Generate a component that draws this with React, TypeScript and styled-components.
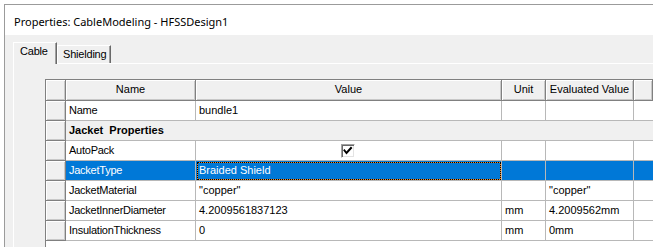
import React from "react";
import styled, { createGlobalStyle, css } from "styled-components";

const GlobalStyle = createGlobalStyle`
  html, body {
    margin: 0;
    padding: 0;
    height: 100%;
    background: #fff;
    overflow: hidden;
  }
  body {
    font-family: "Liberation Sans", Arial, sans-serif;
    font-size: 11px;
    color: #000;
  }
  #root {
    height: 100%;
  }
`;

const columns = [
  { key: "name", label: "Name", width: 130 },
  { key: "value", label: "Value", width: 306 },
  { key: "unit", label: "Unit", width: 44 },
  { key: "evaluated", label: "Evaluated Value", width: 88 },
];

type PropRow = {
  name: string;
  value?: string;
  unit?: string;
  evaluated?: string;
  checkbox?: boolean;
  group?: boolean;
  selected?: boolean;
};

const rows: PropRow[] = [
  { name: "Name", value: "bundle1" },
  { name: "Jacket  Properties", group: true },
  { name: "AutoPack", checkbox: true },
  { name: "JacketType", value: "Braided Shield", selected: true },
  { name: "JacketMaterial", value: '"copper"', evaluated: '"copper"' },
  {
    name: "JacketInnerDiameter",
    value: "4.2009561837123",
    unit: "mm",
    evaluated: "4.2009562mm",
  },
  { name: "InsulationThickness", value: "0", unit: "mm", evaluated: "0mm" },
];

const Window = styled.div`
  box-sizing: border-box;
  margin: 4px 0 0 4px;
  height: calc(100% - 4px);
  border-top: 1px solid #9b9b9b;
  border-left: 1px solid #9b9b9b;
  display: flex;
  flex-direction: column;
`;

const TitleBar = styled.div`
  flex: none;
  box-sizing: border-box;
  height: 30px;
  padding: 3px 0 0 9px;
  display: flex;
  align-items: center;
  background: #fff;
  font-family: "Noto Sans", "Open Sans", sans-serif;
  font-size: 11px;
  color: #000;
`;

const DialogBody = styled.div`
  flex: 1;
  min-height: 0;
  display: flex;
  flex-direction: column;
  background: #f0f0f0;
  padding: 7px 0 0 8px;
`;

const TabStrip = styled.div`
  flex: none;
  height: 21px;
  display: flex;
  align-items: flex-end;
  position: relative;
  z-index: 1;
`;

const Tab = styled.div<{ $active?: boolean }>`
  box-sizing: border-box;
  padding-top: 2px;
  background: #f0f0f0;
  border-top: 1px solid #fff;
  border-left: 1px solid #fff;
  border-right: 1px solid #696969;
  box-shadow: inset -1px 0 #a0a0a0;
  line-height: 13px;
  white-space: nowrap;
  letter-spacing: -0.2px;
  ${(p) =>
    p.$active
      ? css`
          width: 44px;
          height: 22px;
          margin-bottom: -1px;
          padding-left: 6px;
        `
      : css`
          width: 54px;
          height: 18px;
          padding-left: 5px;
        `}
`;

const TabPanel = styled.div`
  flex: 1;
  min-height: 0;
  display: flex;
  border-top: 1px solid #fff;
  border-left: 1px solid #fff;
  padding: 15px 0 0 31px;
`;

const Grid = styled.div`
  flex: 1;
  min-width: 0;
  background: #fff;
  border-top: 1px solid #808080;
  border-left: 1px solid #808080;
  overflow: hidden;
`;

const GridRow = styled.div<{ $header?: boolean }>`
  display: flex;
  height: ${(p) => (p.$header ? 21 : 20)}px;
`;

const HeaderCell = styled.div<{ $w?: number }>`
  box-sizing: border-box;
  ${(p) => (p.$w ? `width: ${p.$w}px; flex: none;` : `flex: 1;`)}
  background: #f0f0f0;
  border-right: 1px solid #808080;
  border-bottom: 1px solid #808080;
  box-shadow: inset 1px 1px #fff, inset -1px -1px #c8c8c8;
  text-align: center;
  line-height: 19px;
  white-space: nowrap;
  overflow: hidden;
`;

const RowHeader = styled(HeaderCell)`
  width: 20px;
  flex: none;
`;

const focusRect = css`
  &::before,
  &::after {
    content: "";
    position: absolute;
    top: 1px;
    left: 1px;
    right: 0;
    bottom: 0;
  }
  &::before {
    border: 1px solid #f2861e;
  }
  &::after {
    border: 1px dotted #000;
  }
`;

const Cell = styled.div<{
  $w?: number;
  $selected?: boolean;
  $focus?: boolean;
  $last?: boolean;
  $tight?: boolean;
}>`
  box-sizing: border-box;
  position: relative;
  ${(p) => (p.$w ? `width: ${p.$w}px; flex: none;` : `flex: 1;`)}
  padding-left: 3px;
  border-right: ${(p) => (p.$last ? "none" : "1px solid #b8b8b8")};
  border-bottom: 1px solid #b8b8b8;
  line-height: 19px;
  letter-spacing: ${(p) => (p.$tight ? "-0.25px" : "0")};
  background: ${(p) => (p.$selected ? "#0078d7" : "#fff")};
  color: ${(p) => (p.$selected ? "#fff" : "#000")};
  white-space: nowrap;
  overflow: hidden;
  ${(p) => p.$focus && focusRect}
`;

const GroupCell = styled.div`
  flex: 1;
  box-sizing: border-box;
  padding-left: 3px;
  background: #f0f0f0;
  border-bottom: 1px solid #b8b8b8;
  font-weight: bold;
  line-height: 19px;
  white-space: pre;
`;

const CheckCell = styled(Cell)`
  display: flex;
  align-items: center;
  justify-content: center;
  padding-left: 0;
`;

const CheckBox = styled.span`
  box-sizing: border-box;
  display: block;
  width: 14px;
  height: 14px;
  margin-left: -1px;
  background: #fff;
  border-top: 1px solid #a0a0a0;
  border-left: 1px solid #a0a0a0;
  border-right: 1px solid #fff;
  border-bottom: 1px solid #fff;
  box-shadow: inset 1px 1px #696969, inset -1px -1px #e3e3e3;
`;

const Check = () => (
  <svg width="12" height="12" viewBox="0 0 12 12" style={{ display: "block" }}>
    <path
      d="M2.5 5.5 L4.5 8 L9 3"
      fill="none"
      stroke="#000"
      strokeWidth="2"
      strokeLinecap="square"
    />
  </svg>
);

const App = () => {
  return (
    <>
      <GlobalStyle />
      <Window>
        <TitleBar>Properties: CableModeling - HFSSDesign1</TitleBar>
        <DialogBody>
          <TabStrip>
            <Tab $active>Cable</Tab>
            <Tab>Shielding</Tab>
          </TabStrip>
          <TabPanel>
            <Grid>
              <GridRow $header>
                <RowHeader />
                {columns.map((c) => (
                  <HeaderCell key={c.key} $w={c.width}>
                    {c.label}
                  </HeaderCell>
                ))}
                <HeaderCell />
              </GridRow>
              {rows.map((r) => (
                <GridRow key={r.name}>
                  <RowHeader />
                  {r.group ? (
                    <GroupCell>{r.name}</GroupCell>
                  ) : (
                    <>
                      <Cell $w={130} $selected={r.selected} $tight>
                        {r.name}
                      </Cell>
                      {r.checkbox ? (
                        <CheckCell $w={306}>
                          <CheckBox>
                            <Check />
                          </CheckBox>
                        </CheckCell>
                      ) : (
                        <Cell $w={306} $selected={r.selected} $focus={r.selected}>
                          {r.value}
                        </Cell>
                      )}
                      <Cell $w={44} $selected={r.selected}>
                        {r.unit}
                      </Cell>
                      <Cell $w={88} $selected={r.selected}>
                        {r.evaluated}
                      </Cell>
                      <Cell $selected={r.selected} $last />
                    </>
                  )}
                </GridRow>
              ))}
            </Grid>
          </TabPanel>
        </DialogBody>
      </Window>
    </>
  );
};

export default App;
